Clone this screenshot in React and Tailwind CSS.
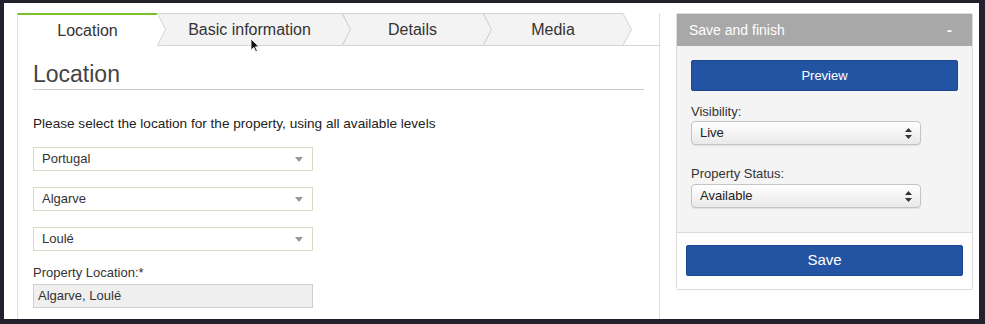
import React from 'react';

const tabs = [
    { label: 'Basic information', w: 185 },
    { label: 'Details', w: 141 },
    { label: 'Media', w: 140 },
];

const ChevronTab = ({ label, w }) => (
    <div className="relative h-full flex items-center justify-center" style={{ width: w }}>
        <svg className="absolute left-0 top-0 overflow-visible" width={w + 9} height="33" viewBox={`0 0 ${w + 9} 33`}>
            <polygon
                points={`0.5,0.5 ${w},0.5 ${w + 8.5},16.5 ${w},32.5 0.5,32.5 8.5,16.5`}
                fill="#f3f3f3"
                stroke="#d3d3d3"
                strokeWidth="1"
            />
        </svg>
        <span className="relative text-[16px] text-[#333]">{label}</span>
    </div>
);

const FlatSelect = ({ value }) => (
    <div className="w-[280px] h-[24px] border border-[#dcd8c8] bg-white flex items-center justify-between pl-[8px] pr-[9px]">
        <span className="text-[13px] text-[#333]">{value}</span>
        <svg width="8" height="5" viewBox="0 0 8 5">
            <polygon points="0,0 8,0 4,5" fill="#9a9a9a" />
        </svg>
    </div>
);

const MacSelect = ({ value }) => (
    <div className="w-[230px] h-[24px] rounded-[4px] border border-[#c4c4c4] bg-gradient-to-b from-white to-[#e9e9e9] shadow-[0_1px_1px_rgba(0,0,0,0.08)] flex items-center justify-between pl-[8px] pr-[8px]">
        <span className="text-[13px] text-[#222]">{value}</span>
        <svg width="7" height="11" viewBox="0 0 7 11">
            <polygon points="3.5,0 7,4 0,4" fill="#333" />
            <polygon points="0,7 7,7 3.5,11" fill="#333" />
        </svg>
    </div>
);

export default function App() {
    return (
        <div className="w-[985px] h-[324px] bg-[#22212d] pl-[4px] pt-[3px] pr-[6px] pb-[5px] font-['Liberation_Sans',Arial,sans-serif]">
            <div className="relative w-full h-full bg-white flex items-start pl-[13px] pt-[10px] pr-[6px] overflow-hidden">
                {/* left column */}
                <div className="w-[643px] h-[320px] flex flex-col">
                    <div className="flex h-[33px] shrink-0">
                        <div className="w-[140px] h-full border-l border-[#ddd] border-t-2 border-t-[#7cbf2b] bg-white flex items-center justify-center">
                            <span className="text-[16px] text-[#333]">Location</span>
                        </div>
                        {tabs.map((t) => (
                            <ChevronTab key={t.label} label={t.label} w={t.w} />
                        ))}
                        <div className="flex-1 h-full border-b border-[#d3d3d3] border-r border-r-[#ddd]"></div>
                    </div>
                    <div className="flex-1 border-l border-r border-[#ddd] pl-[15px] pr-[15px]">
                        <h1 className="mt-[14px] text-[23px] leading-[28px] text-[#444] border-b border-[#ccc] pb-[1px]">Location</h1>
                        <p className="mt-[26px] text-[13.6px] leading-[16px] text-[#222]">
                            Please select the location for the property, using all available levels
                        </p>
                        <div className="mt-[15px] flex flex-col gap-[16px]">
                            <FlatSelect value="Portugal" />
                            <FlatSelect value="Algarve" />
                            <FlatSelect value="Loulé" />
                        </div>
                        <div className="mt-[14px] text-[13px] leading-[16px] text-[#333]">Property Location:*</div>
                        <div className="mt-[3px] w-[280px] h-[24px] border border-[#cfcfcf] bg-[#efefef] flex items-center pl-[4px]">
                            <span className="text-[13px] text-[#333]">Algarve, Loulé</span>
                        </div>
                    </div>
                </div>

                {/* right panel */}
                <div className="ml-[16px] w-[297px] border border-[#dcdcdc] rounded-[2px] flex flex-col">
                    <div className="h-[32px] bg-[#a8a8a8] flex items-center justify-between pl-[12px] pr-[20px]">
                        <span className="text-[14px] text-white">Save and finish</span>
                        <span className="text-[15px] text-white font-bold">-</span>
                    </div>
                    <div className="bg-[#f4f4f4] px-[14px] pt-[14px] pb-[24px] border-b border-[#dcdcdc]">
                        <button className="w-full h-[31px] bg-[#2354a4] border border-[#1d4790] rounded-[2px] text-[13px] text-white">
                            Preview
                        </button>
                        <div className="mt-[13px] text-[13px] leading-[16px] text-[#333]">Visibility:</div>
                        <div className="mt-[1px]">
                            <MacSelect value="Live" />
                        </div>
                        <div className="mt-[21px] text-[13px] leading-[16px] text-[#333]">Property Status:</div>
                        <div className="mt-[2px]">
                            <MacSelect value="Available" />
                        </div>
                    </div>
                    <div className="bg-white px-[9px] pt-[12px] pb-[13px]">
                        <button className="w-full h-[31px] bg-[#2354a4] border border-[#1d4790] rounded-[2px] text-[15px] text-white">
                            Save
                        </button>
                    </div>
                </div>

                {/* mouse pointer */}
                <svg className="absolute left-[246px] top-[35px]" width="10" height="15" viewBox="0 0 10 15">
                    <path d="M1 1 L1 12 L3.8 9.4 L5.8 13.8 L7.4 13.1 L5.4 8.8 L9 8.8 Z" fill="#111" stroke="#fff" strokeWidth="0.8" />
                </svg>
            </div>
        </div>
    );
}
